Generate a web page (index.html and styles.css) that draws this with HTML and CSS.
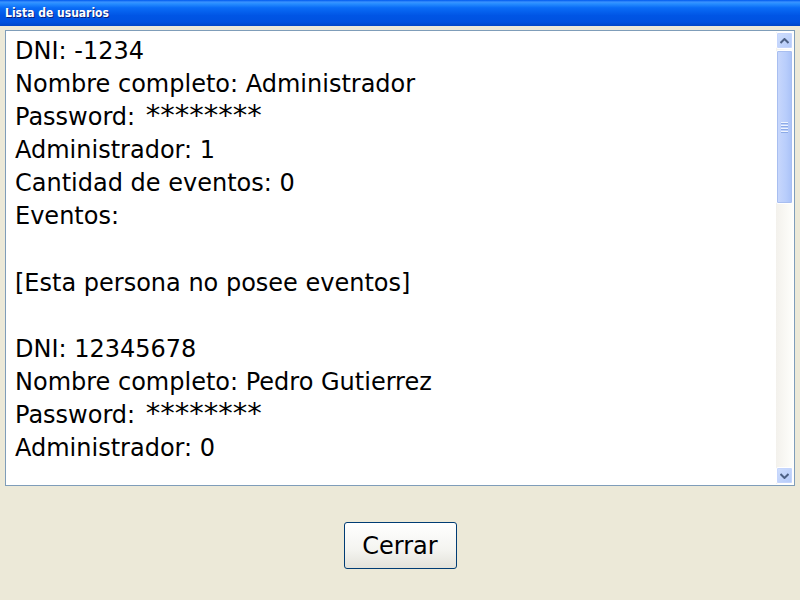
FILE: index.html
```html
<!DOCTYPE html>
<html>
<head>
<meta charset="utf-8">
<link rel="stylesheet" href="styles.css">
</head>
<body>
<div class="window">
  <div class="titlebar"><span class="title">Lista de usuarios</span></div>
  <div class="client">
    <div class="textbox">
      <div class="content">
        <div class="line">DNI: -1234</div>
        <div class="line">Nombre completo: Administrador</div>
        <div class="line">Password: <span class="stars">********</span></div>
        <div class="line">Administrador: 1</div>
        <div class="line">Cantidad de eventos: 0</div>
        <div class="line">Eventos:</div>
        <div class="line">&nbsp;</div>
        <div class="line">[Esta persona no posee eventos]</div>
        <div class="line">&nbsp;</div>
        <div class="line">DNI: 12345678</div>
        <div class="line">Nombre completo: Pedro Gutierrez</div>
        <div class="line">Password: <span class="stars">********</span></div>
        <div class="line">Administrador: 0</div>
      </div>
      <div class="scrollbar">
        <div class="sb-btn">
          <svg width="9" height="6" viewBox="0 0 9 6"><path d="M0.5 5 L4.5 1 L8.5 5" fill="none" stroke="#4d6185" stroke-width="2"/></svg>
        </div>
        <div class="sb-track">
          <div class="sb-thumb">
            <div class="grip"><i></i><i></i><i></i><i></i></div>
          </div>
        </div>
        <div class="sb-btn">
          <svg width="9" height="6" viewBox="0 0 9 6"><path d="M0.5 1 L4.5 5 L8.5 1" fill="none" stroke="#4d6185" stroke-width="2"/></svg>
        </div>
      </div>
    </div>
    <div class="actions">
      <button class="btn">Cerrar</button>
    </div>
  </div>
</div>
</body>
</html>
```
FILE: styles.css
```css
* { box-sizing: border-box; }
html, body { margin: 0; padding: 0; }
body {
  width: 800px;
  height: 600px;
  overflow: hidden;
  background: #ece9d8;
  font-family: "DejaVu Sans", sans-serif;
}
.window { display: flex; flex-direction: column; height: 600px; }
.titlebar {
  height: 26px;
  background: linear-gradient(to bottom, #0058ee 0%, #3a93ff 8%, #288eff 14%, #0a6cf6 30%, #0055e5 60%, #0052e0 85%, #0046c8 100%);
  display: flex;
  align-items: center;
  padding-left: 5px;
  padding-bottom: 1px;
}
.title {
  color: #fff;
  font-family: "DejaVu Sans Condensed", "DejaVu Sans", sans-serif;
  font-weight: bold;
  font-size: 12px;
  text-shadow: 1px 1px 0 #0a1f7a;
}
.client { flex: 1; display: flex; flex-direction: column; padding: 4px 5px 0 5px; }
.textbox {
  height: 456px;
  border: 1px solid #7f9db9;
  background: #fff;
  display: flex;
  padding: 1px 1px 1px 0;
}
.content {
  flex: 1;
  overflow: hidden;
  padding: 3px 0 0 9px;
  font-size: 24px;
  line-height: 33.1px;
  color: #000;
}
.line { white-space: pre; height: 33.1px; }
.stars { font-size: 29px; line-height: 1; margin-left: 3px; }
.scrollbar {
  width: 17px;
  display: flex;
  flex-direction: column;
  background: linear-gradient(to right, #f3f1ec, #fefefb);
}
.sb-btn {
  height: 17px;
  flex: none;
  border: 1px solid #fff;
  border-radius: 2px;
  background: linear-gradient(to bottom right, #d0dffd, #b3c9f9);
  box-shadow: inset 0 0 0 1px #c5d5fc;
  display: flex;
  align-items: center;
  justify-content: center;
}
.sb-track { flex: 1; padding: 1px 0; }
.sb-thumb {
  height: 154px;
  border: 1px solid #fff;
  border-radius: 2px;
  background: linear-gradient(to right, #c9d8fc, #b8cdfb 60%, #a9c1f7);
  box-shadow: inset 0 0 0 1px #a8bef0;
  display: flex;
  align-items: center;
  justify-content: center;
}
.grip { display: flex; flex-direction: column; gap: 1px; }
.grip i { display: block; width: 7px; height: 1px; background: #eef4fe; box-shadow: 0 1px 0 #8caae6; margin-bottom: 1px; }
.actions { flex: 1; display: flex; justify-content: center; padding-top: 36px; }
.btn {
  width: 113px;
  height: 47px;
  border: 1px solid #003c74;
  border-radius: 3px;
  background: linear-gradient(to bottom, #fff 0%, #f4f4f0 60%, #e3e2da 100%);
  font-family: "DejaVu Sans", sans-serif;
  font-size: 24px;
  color: #000;
  padding: 0;
}
```
